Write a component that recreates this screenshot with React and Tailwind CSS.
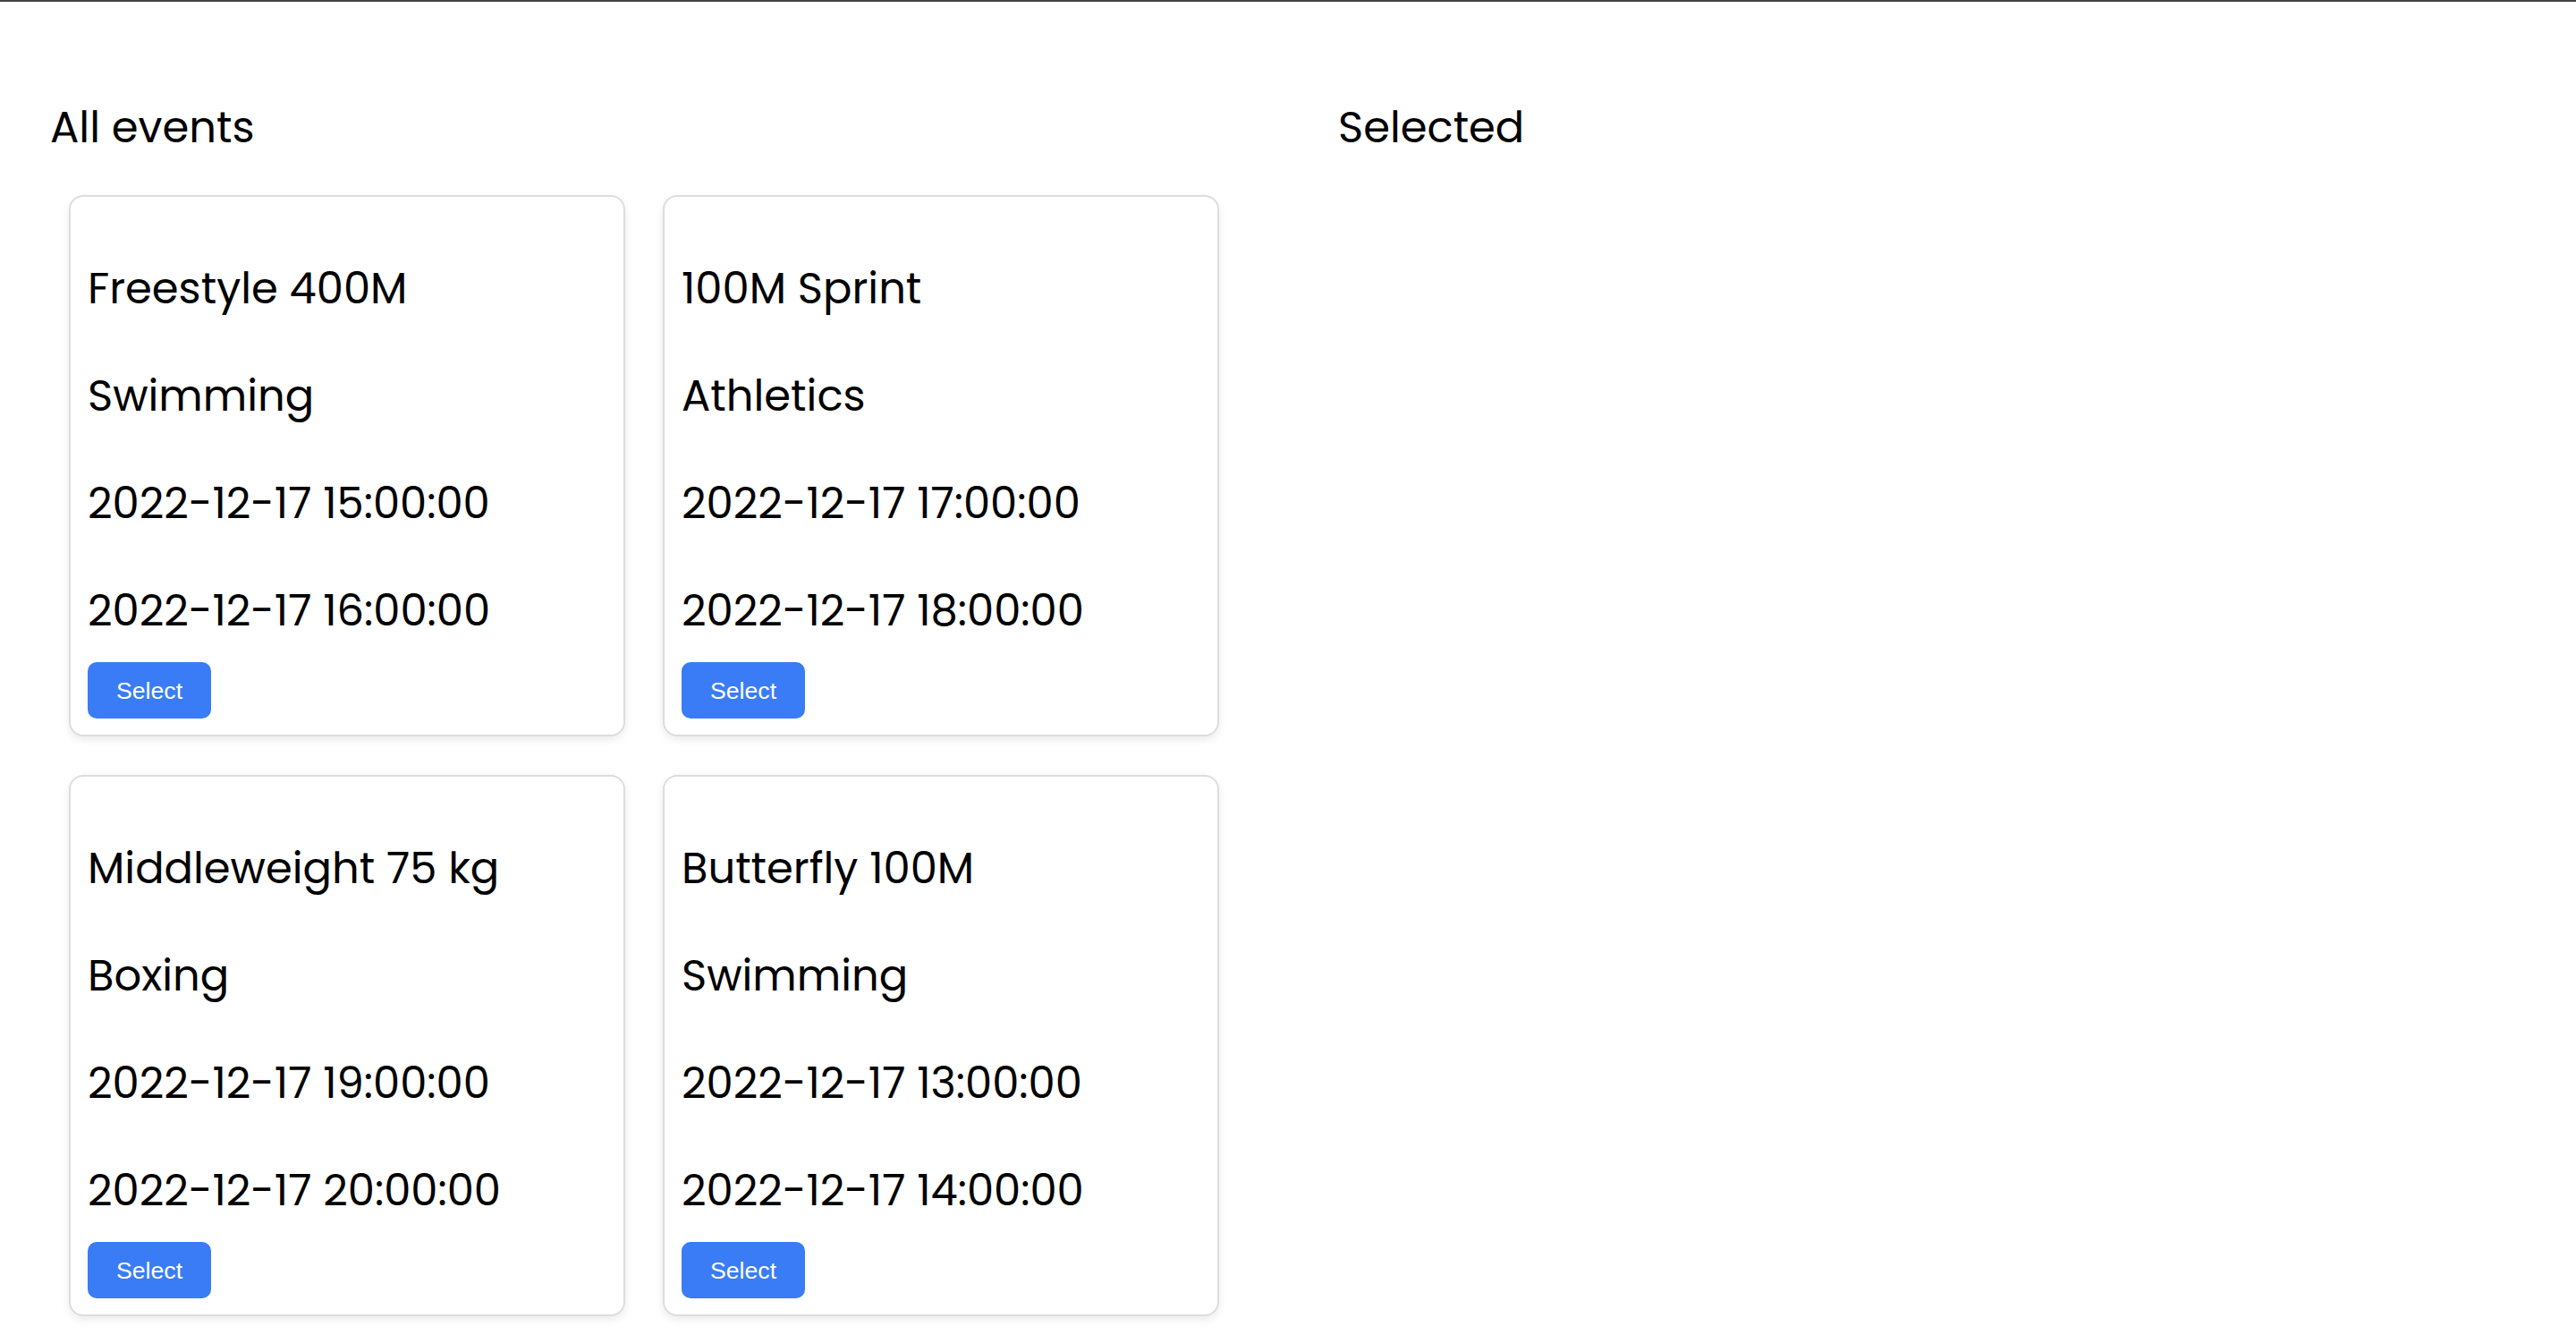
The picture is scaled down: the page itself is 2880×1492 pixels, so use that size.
import React from "react";

const events = [
  { name: "Freestyle 400M", category: "Swimming", start: "2022-12-17 15:00:00", end: "2022-12-17 16:00:00" },
  { name: "100M Sprint", category: "Athletics", start: "2022-12-17 17:00:00", end: "2022-12-17 18:00:00" },
  { name: "Middleweight 75 kg", category: "Boxing", start: "2022-12-17 19:00:00", end: "2022-12-17 20:00:00" },
  { name: "Butterfly 100M", category: "Swimming", start: "2022-12-17 13:00:00", end: "2022-12-17 14:00:00" },
];

const EventCard = ({ event }) => {
  return (
    <div className="rounded-[16px] border-2 border-[#dddddd] bg-white px-[19px] pt-[67px] pb-[18px] shadow-[0_4px_10px_rgba(0,0,0,0.08)]">
      <p className="mb-[48px] text-[48px] leading-[72px]">{event.name}</p>
      <p className="mb-[48px] text-[48px] leading-[72px]">{event.category}</p>
      <p className="mb-[48px] text-[48px] leading-[72px]">{event.start}</p>
      <p className="text-[48px] leading-[72px]">{event.end}</p>
      <button className="mt-[21px] h-[63px] rounded-[10px] bg-[#3a7cf5] px-[32px] font-['Liberation_Sans',Arial,sans-serif] text-[26.67px] text-white">
        Select
      </button>
    </div>
  );
};

const App = () => {
  return (
    <div className="min-h-screen border-t-2 border-[#444444] bg-white text-black font-['Poppins','Inter',sans-serif]">
      <div className="grid grid-cols-2 pt-[105px]">
        {/* All events */}
        <div className="pl-[56px]">
          <h2 className="text-[48px] leading-[72px] font-normal">All events</h2>
          <div className="mt-[39px] ml-[21px] grid grid-cols-[622px_622px] gap-x-[42px] gap-y-[43px]">
            {events.map((e) => (
              <EventCard key={e.name} event={e} />
            ))}
          </div>
        </div>

        {/* Selected */}
        <div className="pl-[56px]">
          <h2 className="text-[48px] leading-[72px] font-normal">Selected</h2>
        </div>
      </div>
    </div>
  );
};

export default App;
